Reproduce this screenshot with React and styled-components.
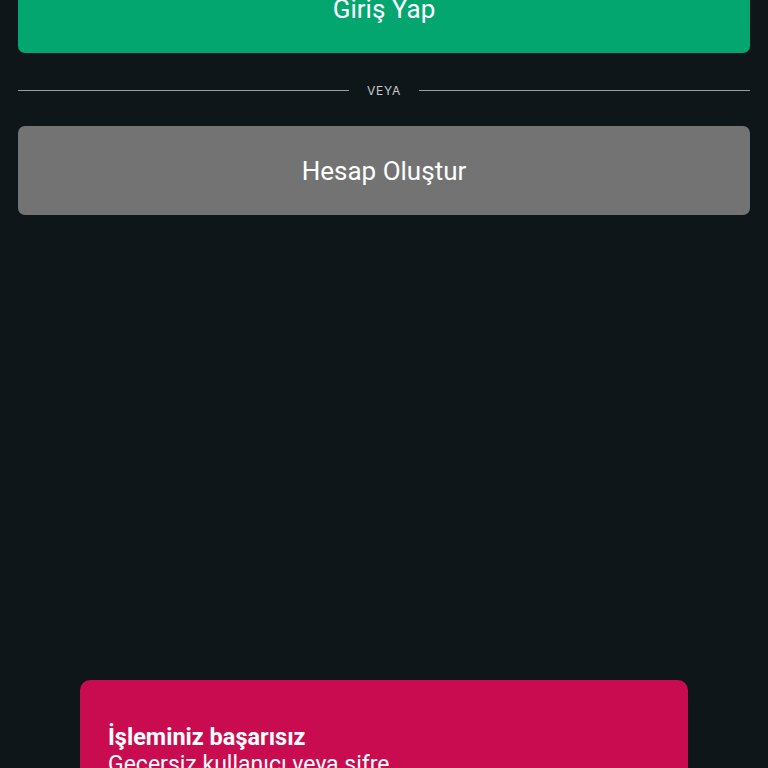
import React from "react";
import styled, { createGlobalStyle } from "styled-components";

const Global = createGlobalStyle`
  html, body { margin: 0; padding: 0; background: #0f161a; }
  body { font-family: Roboto, "Noto Sans", sans-serif; }
`;

const Page = styled.div`
  position: relative;
  width: 768px;
  height: 768px;
  overflow: hidden;
  background: #0f161a;
  box-sizing: border-box;
  padding: 0 18px;
  display: flex;
  flex-direction: column;
`;

const Button = styled.button`
  width: 100%;
  height: 89px;
  border: none;
  border-radius: 7px;
  background: ${(p) => p.$bg};
  color: #ffffff;
  font-family: Roboto, "Noto Sans", sans-serif;
  font-size: 26px;
  font-weight: 400;
  display: flex;
  align-items: center;
  justify-content: center;
  margin-top: ${(p) => p.$mt || 0}px;
  padding: 0;
`;

const Divider = styled.div`
  display: flex;
  align-items: center;
  gap: 18px;
  height: 20px;
  margin: 27px 0 26px;
`;

const Line = styled.div`
  flex: 1;
  height: 1px;
  background: #9a9ea0;
`;

const DividerText = styled.span`
  color: #c8cacb;
  font-size: 12px;
  letter-spacing: 0.8px;
  font-family: Inter, Roboto, sans-serif;
`;

const Toast = styled.div`
  position: absolute;
  left: 80px;
  top: 680px;
  width: 608px;
  height: 120px;
  box-sizing: border-box;
  padding: 43px 28px 0;
  background: #c90c4f;
  border-radius: 10px;
  color: #ffffff;
`;

const ToastTitle = styled.div`
  font-size: 23.5px;
  font-weight: 700;
  line-height: 28px;
`;

const ToastText = styled.div`
  font-size: 23px;
  font-weight: 400;
  line-height: 28px;
`;

export default function App() {
  return (
    <>
      <Global />
      <Page>
        <Button $bg="#04a66f" $mt={-36}>Giriş Yap</Button>
        <Divider>
          <Line />
          <DividerText>VEYA</DividerText>
          <Line />
        </Divider>
        <Button $bg="#737373">Hesap Oluştur</Button>
        <Toast>
          <ToastTitle>İşleminiz başarısız</ToastTitle>
          <ToastText>Geçersiz kullanıcı veya şifre</ToastText>
        </Toast>
      </Page>
    </>
  );
}
